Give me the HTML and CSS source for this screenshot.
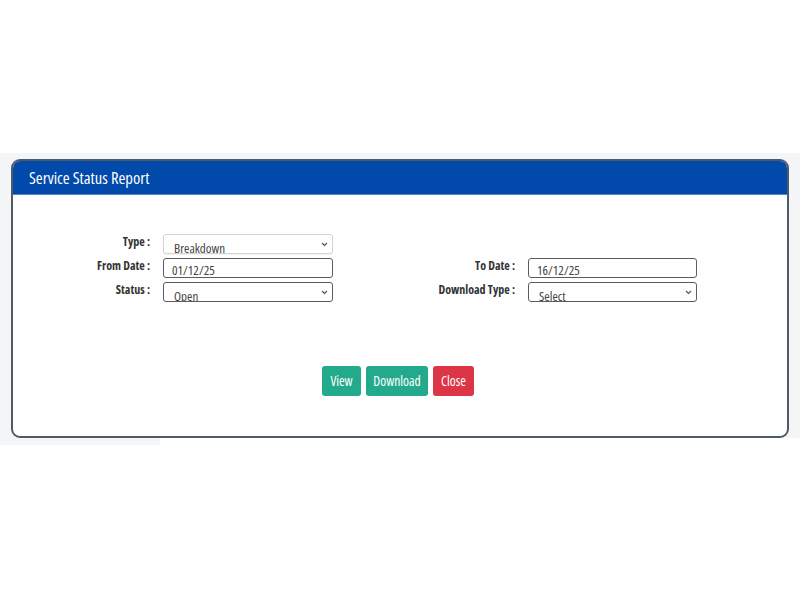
FILE: index.html
```html
<!DOCTYPE html>
<html>
<head>
<meta charset="utf-8">
<link rel="stylesheet" href="styles.css">
</head>
<body>
<div class="spacer"></div>
<div class="band">
  <div class="card">
    <div class="card-header">Service Status Report</div>
    <div class="card-body">
      <div class="form-grid">
        <label class="lbl">Type :</label>
        <div class="sel-wrap">
          <select class="ctl ctl-light"><option>Breakdown</option></select>
          <svg class="chev" width="7" height="5" viewBox="0 0 7 5"><path d="M1 1 L3.5 3.5 L6 1" fill="none" stroke="#555" stroke-width="1.2"/></svg>
        </div>
        <span></span><span></span>

        <label class="lbl">From Date :</label>
        <input class="ctl" type="text" value="01/12/25">
        <label class="lbl">To Date :</label>
        <input class="ctl" type="text" value="16/12/25">

        <label class="lbl">Status :</label>
        <div class="sel-wrap">
          <select class="ctl"><option>Open</option></select>
          <svg class="chev" width="7" height="5" viewBox="0 0 7 5"><path d="M1 1 L3.5 3.5 L6 1" fill="none" stroke="#555" stroke-width="1.2"/></svg>
        </div>
        <label class="lbl">Download Type :</label>
        <div class="sel-wrap">
          <select class="ctl"><option>Select</option></select>
          <svg class="chev" width="7" height="5" viewBox="0 0 7 5"><path d="M1 1 L3.5 3.5 L6 1" fill="none" stroke="#555" stroke-width="1.2"/></svg>
        </div>
      </div>
      <div class="actions">
        <button class="btn btn-teal btn-view">View</button>
        <button class="btn btn-teal btn-download">Download</button>
        <button class="btn btn-red btn-close">Close</button>
      </div>
    </div>
  </div>
</div>
<div class="tail"></div>
</body>
</html>
```

FILE: styles.css
```css
html, body {
  margin: 0;
  padding: 0;
  background: #ffffff;
  font-family: "Open Sans", "Noto Sans", "Liberation Sans", sans-serif;
  font-stretch: 75%;
}
.spacer {
  height: 153px;
}
.band {
  background: #f4f5f6;
  padding: 6px 11px 0 11px;
}
.tail {
  width: 160px;
  height: 7px;
  background: #f4f5f6;
}
.card {
  border: 2px solid #4d5b69;
  border-radius: 9px;
  background: #ffffff;
  overflow: hidden;
}
.card-header {
  background: #0149aa;
  color: #ffffff;
  font-size: 16.6px;
  height: 33px;
  line-height: 34px;
  padding-left: 16px;
  border-bottom: 1px solid #5a86c8;
}
.card-body {
  padding: 39px 0 40px 0;
}
.form-grid {
  display: grid;
  grid-template-columns: 138px 170px 171px 169px;
  grid-auto-rows: 20px;
  column-gap: 12px;
  row-gap: 4px;
}
.lbl {
  text-align: right;
  font-weight: bold;
  font-size: 12px;
  color: #333333;
  line-height: 16px;
  padding-right: 1px;
}
.sel-wrap {
  position: relative;
}
.chev {
  position: absolute;
  right: 5px;
  top: 8px;
  pointer-events: none;
}
.ctl {
  box-sizing: border-box;
  height: 20px;
  width: 100%;
  margin: 0;
  border: 1px solid #5c5c5c;
  border-radius: 3px;
  background: #ffffff;
  font-family: inherit;
  font-stretch: 75%;
  font-size: 13px;
  color: #444444;
  padding: 3px 0 0 8px;
}
select.ctl {
  -webkit-appearance: none;
  appearance: none;
  padding: 4px 14px 0 10px;
}
.ctl-light {
  border-color: #d4d4d4;
  box-shadow: 0 1px 1px rgba(0, 0, 0, 0.06);
}
.actions {
  display: flex;
  justify-content: center;
  gap: 5px;
  margin-top: 64px;
  padding-right: 4px;
}
.btn {
  height: 30px;
  border: none;
  border-radius: 3px;
  color: #ffffff;
  font-family: inherit;
  font-stretch: 75%;
  font-size: 13.5px;
  padding: 0;
}
.btn-teal {
  background: #23aa8c;
}
.btn-red {
  background: #dc3545;
}
.btn-view { width: 39px; }
.btn-download { width: 62px; }
.btn-close { width: 41px; }
```
